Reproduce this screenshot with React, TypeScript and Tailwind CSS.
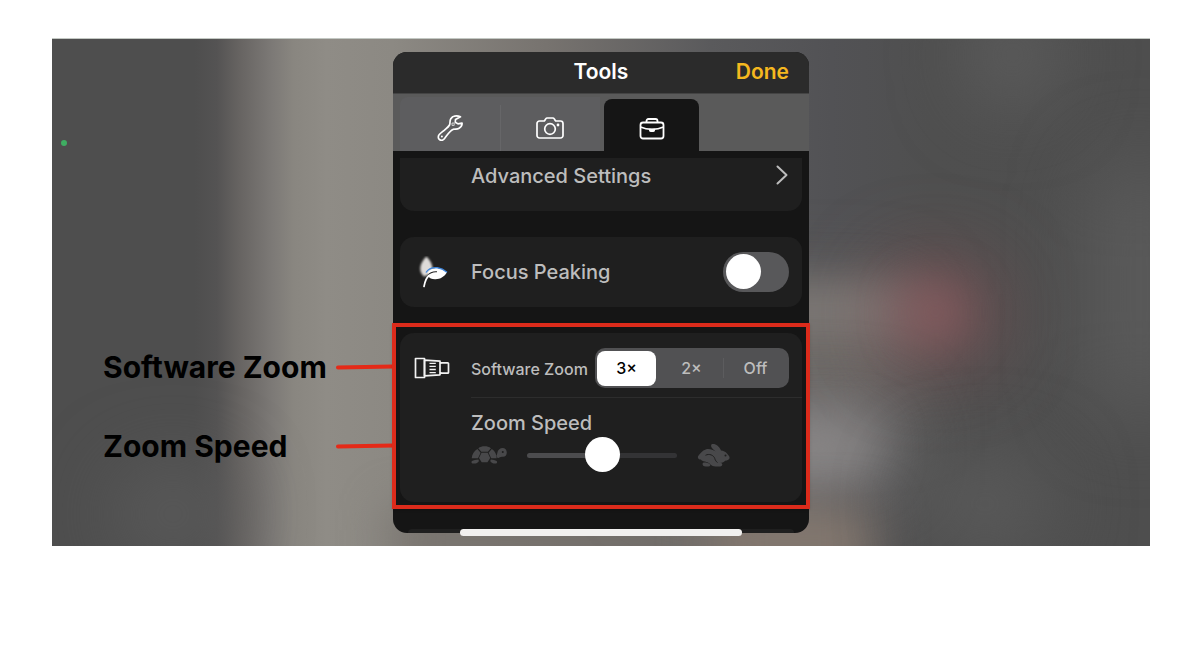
import { useState } from "react";

type ZoomFactor = "3×" | "2×" | "Off";

const ZOOM_FACTORS: ZoomFactor[] = ["3×", "2×", "Off"];

function WrenchIcon() {
  return (
    <svg viewBox="0 0 26 26" className="size-[26px]" fill="none" stroke="currentColor" strokeWidth="1.7" strokeLinejoin="round">
      <path d="M23.500 1.800C19.500 .2 15.500 1 13.800 3.700c-1.400 2.200-.3 4.400-1.300 6.300-1 1.900-2.600 3-4.700 4.800-2 1.700-3.700 2.700-5.300 4.500-1.700 1.900-1.500 4 0 5.200 1.400 1.100 3.400.9 4.900-.8 1.700-2 2.700-3.900 4.500-5.800 1.600-1.800 2.900-3.300 4.800-3.700 1.600-.4 3.300.3 5-.7 2.500-1.500 3.700-3.400 3.300-5.500l-4 .9-2.700-1.700.2-2.700z" />
      <circle cx="4.900" cy="21.600" r="1" fill="currentColor" stroke="none" />
      <path d="M15 8h2.200v2.400H15z" strokeWidth="0.7" />
    </svg>
  );
}

function CameraIcon() {
  return (
    <svg viewBox="0 0 28 22" className="h-[22px] w-7" fill="none" stroke="currentColor" strokeWidth="1.7" strokeLinejoin="round">
      <path d="M3.500 4h4.200c.6 0 .9-.3 1.200-.8l.8-1.300c.4-.6.8-.9 1.500-.9h5.600c.7 0 1.100.3 1.500.9l.8 1.300c.3.5.6.8 1.200.8h4.200A2.500 2.500 0 0 1 27 6.500v12a2.500 2.500 0 0 1-2.500 2.500h-21A2.500 2.500 0 0 1 1 18.500v-12A2.500 2.500 0 0 1 3.500 4z" />
      <circle cx="14" cy="12" r="5.300" />
      <circle cx="22" cy="8" r="1.400" fill="currentColor" stroke="none" />
    </svg>
  );
}

function BriefcaseIcon() {
  return (
    <svg viewBox="0 0 26 22" className="h-[22px] w-[26px]" fill="none" stroke="currentColor" strokeWidth="1.800" strokeLinejoin="round">
      <rect x="1.500" y="4.500" width="23" height="16" rx="2.500" />
      <path d="M7.500 4.500V3c0-1.200.7-2 2-2h7c1.300 0 2 .8 2 2v1.500M1.500 9c3.500 1.600 7.500 2.300 11.500 2.300S21 10.600 24.500 9" />
      <path d="M10 10.800h6v1.400c0 1-.7 1.700-1.600 1.700h-2.800c-.9 0-1.600-.7-1.600-1.700z" fill="currentColor" stroke="none" />
    </svg>
  );
}

function LeafIcon() {
  return (
    <svg viewBox="0 0 30 32" className="h-8 w-[30px]">
      <defs>
        <filter id="soft" x="-40%" y="-40%" width="180%" height="180%">
          <feGaussianBlur stdDeviation="1.300" />
        </filter>
      </defs>
      <path d="M8.500 .5c5 5 7.500 11 5 17L6 20.500C-.5 15 2 6.500 8.500 .5z" fill="#dedbd9" filter="url(#soft)" />
      <path d="M9.500 19.500c0-4.500 4.500-8 10-7.500 3.500.4 6.500 2 9.500 4.300-2.500 4.300-6.500 6.900-11.500 7-3.500.1-6-.8-8-3.800z" fill="#fff" />
      <path d="M8 16.500c2.500-4 7-5.300 11.500-4.800 3.500.4 6.500 2 9.500 4.600" fill="none" stroke="#3f86dc" strokeWidth="1.400" />
      <path d="M19 15.800c-4-.4-7 .8-9.700 3.700" fill="none" stroke="#222" strokeWidth="1.100" />
      <path d="M11 19.500C8 22 6.800 26 6 30.500" fill="none" stroke="#fff" strokeWidth="1.700" strokeLinecap="round" />
    </svg>
  );
}

function LensIcon() {
  return (
    <svg viewBox="0 0 36 22" className="h-[22px] w-9" fill="none" stroke="#f2f2f2" strokeWidth="1.700" strokeLinejoin="round">
      <path d="M1.500 1.500h9v19h-9z" />
      <path d="M10.500 3.200l15.500 1v13.600l-15.500 1zM26 6.800l1.500-1h6.200c.5 0 .8.300.8.800v8.800c0 .5-.3.800-.8.800h-6.200l-1.500-1" />
      <path d="M15.500 6.300h6.300M15.500 9.400h6.300M15.500 12.500h6.300M15.500 15.600h6.300" strokeWidth="1.300" />
    </svg>
  );
}

function TurtleIcon() {
  return (
    <svg viewBox="0 0 36 18" className="h-[18px] w-9 shrink-0" fill="currentColor">
      <path d="M7.300 2.200C9 .8 11.300.2 13.600.2s4.600.6 6.300 2l-3 3.600h-6.600zM6.400 3.100l3.200 3.600-2.600 5.500H.7C1 8.700 3 5.300 6.400 3.100zM20.800 3.100l-3.200 3.600 2.600 5.500h5.500c-.2-3.500-1.500-6.900-4.900-9.100zM10.500 6.800h6.200l2.500 5.200-2.700 4.200h-5.800L8 12z" />
      <path d="M7.300 13.400c.9 1 .6 2-.3 2.800-.9.900-2 1.300-3.500 1.300H1.700c-1.300 0-1.700-1.600-.7-2.400 1.600-1 3.800-1.400 6.300-1.700zM19.900 13.400c-.9 1-.6 2 .3 2.800.9.900 2 1.300 3.500 1.300h1.200c1.300 0 1.700-1.600.7-2.400-1.600-1-3.300-1.400-5.700-1.700z" />
      <path fillRule="evenodd" d="M25.400 9.800c.9-1.300.8-3.200 1.400-4.600.8-2 2.500-3.300 4.700-3.300 2.600 0 4.300 2 4.300 4.500 0 2.700-1.500 4.300-3.800 4.300-1.700 0-2.700.4-4 1-1 .4-1.800.2-2-.4zM31.800 4.900a1 1 0 1 0 0 2 1 1 0 0 0 0-2z" />
    </svg>
  );
}

function RabbitIcon() {
  return (
    <svg viewBox="0 0 33 24" className="h-6 w-[33px] shrink-0" fill="currentColor">
      <path d="M14.600 1.200C18 .1 22 2.700 24 7.500c2.400.3 4.600 1.200 6 3 .9 1.100 2.600 2.600 2.600 4.100 0 2.200-2 3-4.600 3.100-1.200 1.500-3 2.200-4.800 2 1.200.1 2.100.8 2.100 1.900 0 1.200-.8 1.800-2.200 1.800h-4.500c-2.200 0-3.800-.7-5.200-2-1.600-1.500-3.300-2.400-5.500-2.800-2-.3-3.400-1-4-2.100-2.500.2-3.800-2.200-2.500-3.800 1.700-2.100 4-5.400 7.300-6.300 3.400-.8 7 .1 9.800 2.100-1.500-1.500-4.600-4-4.400-5.700 0-.7.100-1.300.5-1.600z" />
      <path d="M8.500 12.300c3.500-2 8.300-.2 9.300 3.300.5 1.700 1.300 3 2.700 3.900" fill="none" className="stroke-[#1f1f1f]" strokeWidth="1" />
      <path d="M6.800 19.600c2-.2 4.300.3 5.800 1.500 1.300 1.100.6 2.500-1.300 2.500H8.600c-1.600 0-2.800-.8-3-2-.2-1 .2-1.900 1.200-2z" />
      <circle cx="28.500" cy="12.500" r="1" className="fill-[#1f1f1f]" />
    </svg>
  );
}

function Callout({ label }: { label: string }) {
  return (
    <div className="flex h-9 items-center justify-between">
      <span className="whitespace-nowrap text-3xl font-bold text-black">{label}</span>
      <svg viewBox="0 0 58 6" className="h-[6px] w-[58px] shrink-0" aria-hidden="true">
        <path d="M3 3.500L58 2.500" stroke="#e52a18" strokeWidth="4" strokeLinecap="round" />
      </svg>
    </div>
  );
}

// Out-of-focus camera view behind the panel
function Viewfinder() {
  return (
    <div
      aria-hidden="true"
      className="absolute inset-0 overflow-hidden bg-[linear-gradient(to_right,#4e4e4e_13%,#545353_15%,#666361_17%,#7c7976_20%,#898680_22%,#8f8c86_25%,#8c8983_31%,#77736f_45%,#5a5a5c_60%,#525255_71%,#4f4f4f_80%,#4e4e4e)]"
    >
      <div className="absolute -bottom-5 left-[31%] h-14 w-[40%] bg-[#76716c] blur-xl" />
      <div className="absolute top-[255px] left-[55%] h-[110px] w-[23%] bg-[#6d6965] blur-2xl" />
      <div className="absolute top-[250px] left-[55%] h-[42px] w-[24%] rounded-full bg-[#84807d] blur-xl" />
      <div className="absolute top-[375px] left-[55%] h-[65px] w-[22%] rounded-r-3xl bg-[#918e8e] blur-2xl" />
      <div className="absolute top-[385px] left-[55%] h-[50px] w-[20%] rounded-r-3xl bg-[#8a8787] blur-xl" />
      <div className="absolute top-[470px] left-[60%] h-[70px] w-[15%] bg-[#84786f] blur-xl" />
      <div className="absolute top-[222px] left-[75%] h-[105px] w-[11%] rounded-full bg-[#8a5256]/60 blur-2xl" />
      <div className="absolute top-[248px] left-[78%] h-[50px] w-[5%] rounded-full bg-[#8a5d61] blur-xl" />
      <div className="absolute -top-8 left-[84%] h-24 w-[7%] rounded-full bg-[#616161] blur-2xl" />
      <div className="absolute top-[120px] left-[95%] h-[260px] w-[8%] rounded-full bg-[#5c5c5c] blur-2xl" />
      <div className="absolute top-[420px] left-[79%] h-[90px] w-[12%] rounded-full bg-[#5b5b5b] blur-2xl" />
      <div className="absolute top-[430px] left-[6%] h-[90px] w-[10%] rounded-full bg-[#5c5c5c] blur-2xl" />
    </div>
  );
}

function TabBar() {
  return (
    <div role="tablist" className="flex h-[57px] items-end bg-[#5a5a5a] pl-[7px] text-white">
      <div className="mr-1 flex h-[54px] w-[200px] rounded-tl-lg bg-[#5d5d5f] pt-2">
        <button role="tab" aria-selected="false" aria-label="Wrench" className="flex flex-1 items-center justify-center border-r border-[#666668]">
          <WrenchIcon />
        </button>
        <button role="tab" aria-selected="false" aria-label="Camera" className="flex flex-1 items-center justify-center">
          <CameraIcon />
        </button>
      </div>
      <button role="tab" aria-selected="true" aria-label="Toolbox" className="flex h-[52px] w-[95px] items-center justify-center rounded-t-lg bg-[#151515] pt-2">
        <BriefcaseIcon />
      </button>
    </div>
  );
}

function ToolsPanel() {
  const [peaking, setPeaking] = useState(false);
  const [factor, setFactor] = useState<ZoomFactor>("3×");
  const [speed, setSpeed] = useState(50);

  return (
    <main className="relative rounded-[14px] bg-[#151515] text-[#bdbdbd]">
      <header className="grid h-[42px] grid-cols-3 items-center rounded-t-[14px] border-b border-[#444] bg-[#2b2b2b] px-5 pb-[2px]">
        <h1 className="col-start-2 text-center text-[21px] font-semibold text-white">Tools</h1>
        <button className="justify-self-end text-[21px] font-semibold text-[#f5b81f]">Done</button>
      </header>
      <TabBar />

      <div className="px-[7px] pt-[7px]">
        <button className="flex h-[53px] w-full items-start justify-between rounded-b-[14px] bg-[#1f1f1f] pr-[14px] pl-[71px] pt-1 text-xl font-medium">
          Advanced Settings
          <svg viewBox="0 0 12 20" className="mt-[3px] h-5 w-3" fill="none" stroke="currentColor" strokeWidth="2" strokeLinecap="round" strokeLinejoin="round">
            <path d="M1.500 1.500L10.500 10L1.500 18.500" />
          </svg>
        </button>

        <label className="mt-[26px] flex h-[70px] items-center rounded-[14px] bg-[#1f1f1f] pr-[13px] pl-[18px]">
          <LeafIcon />
          <span className="ml-[23px] flex-1 text-xl font-medium">Focus Peaking</span>
          <input
            type="checkbox"
            role="switch"
            checked={peaking}
            onChange={(e) => setPeaking(e.target.checked)}
            className="h-10 w-[66px] appearance-none rounded-full bg-[#58585a] px-[3px] py-[2px] before:block before:size-[35px] before:rounded-full before:bg-white checked:bg-green-500 checked:before:ml-[25px]"
          />
        </label>

        <section className="relative mt-[26px] h-[169px] rounded-[14px] bg-[#1f1f1f] pt-[15px]">
          <div className="flex items-center pr-[13px] pl-[14px]">
            <LensIcon />
            <span id="zoom-label" className="ml-[21px] flex-1 whitespace-nowrap pt-[2px] text-base font-medium">Software Zoom</span>
            <div role="radiogroup" aria-labelledby="zoom-label" className="flex h-10 w-[194px] items-center rounded-[10px] bg-[#515153] px-[2px]">
              {ZOOM_FACTORS.map((f) => (
                <label
                  key={f}
                  className={`flex items-center justify-center text-base font-medium ${
                    factor === f ? "rounded-lg bg-white text-black" : "text-[#bdbdbd]"
                  } ${f === "3×" ? "mr-1 h-[35px] w-[59px]" : "h-[35px] flex-1"}`}
                >
                  <input type="radio" name="zoom" className="sr-only" checked={factor === f} onChange={() => setFactor(f)} />
                  {f}
                </label>
              )).flatMap((item, i) => (i === 2 ? [<span key="divider" className="h-5 w-px bg-[#5c5c5e]" />, item] : [item]))}
            </div>
          </div>
          <div className="mt-[9px] ml-[71px] border-t border-[#2d2d2d] pt-[11px]">
            <label htmlFor="speed" className="block text-xl leading-7 font-medium">Zoom Speed</label>
            <div className="flex h-9 items-center text-[#48484a]">
              <TurtleIcon />
              <input
                id="speed"
                type="range"
                value={speed}
                onChange={(e) => setSpeed(Number(e.target.value))}
                className="mx-5 h-9 w-[150px] appearance-none bg-transparent [&::-webkit-slider-runnable-track]:h-[5px] [&::-webkit-slider-runnable-track]:rounded-full [&::-webkit-slider-runnable-track]:bg-[linear-gradient(to_right,#4c4c4e_50%,#333335_50%)] [&::-webkit-slider-thumb]:mt-[-16px] [&::-webkit-slider-thumb]:size-[35px] [&::-webkit-slider-thumb]:appearance-none [&::-webkit-slider-thumb]:rounded-full [&::-webkit-slider-thumb]:bg-white"
              />
              <RabbitIcon />
            </div>
          </div>
          <div className="pointer-events-none absolute -inset-x-2 -top-[10px] -bottom-[7px] border-4 border-[#dc2b1b] shadow-sm" />
        </section>

        <div className="mx-2 mt-[27px] h-1 rounded-t-[14px] bg-[#1f1f1f]" />
      </div>
      <div className="absolute -bottom-[3px] left-1/2 h-[7px] w-[282px] -translate-x-1/2 rounded-full bg-[#f1f0ef]" />
    </main>
  );
}

export default function App() {
  return (
    <div className="bg-white pt-[38px] pr-[50px] pb-[104px] pl-[52px] font-['Inter','Liberation_Sans',sans-serif]">
      <div className="relative grid grid-cols-[1fr_416px_1fr] items-start border-t border-[#c3c8c3] pt-[13px] pb-[13px]">
        <Viewfinder />
        <div className="absolute top-[101px] left-[9px] size-[6px] rounded-full bg-[#3fae62]" />
        <aside className="relative flex flex-col gap-[43px] pt-[297px] pl-[51px]">
          <Callout label="Software Zoom" />
          <Callout label="Zoom Speed" />
        </aside>
        <ToolsPanel />
      </div>
    </div>
  );
}
